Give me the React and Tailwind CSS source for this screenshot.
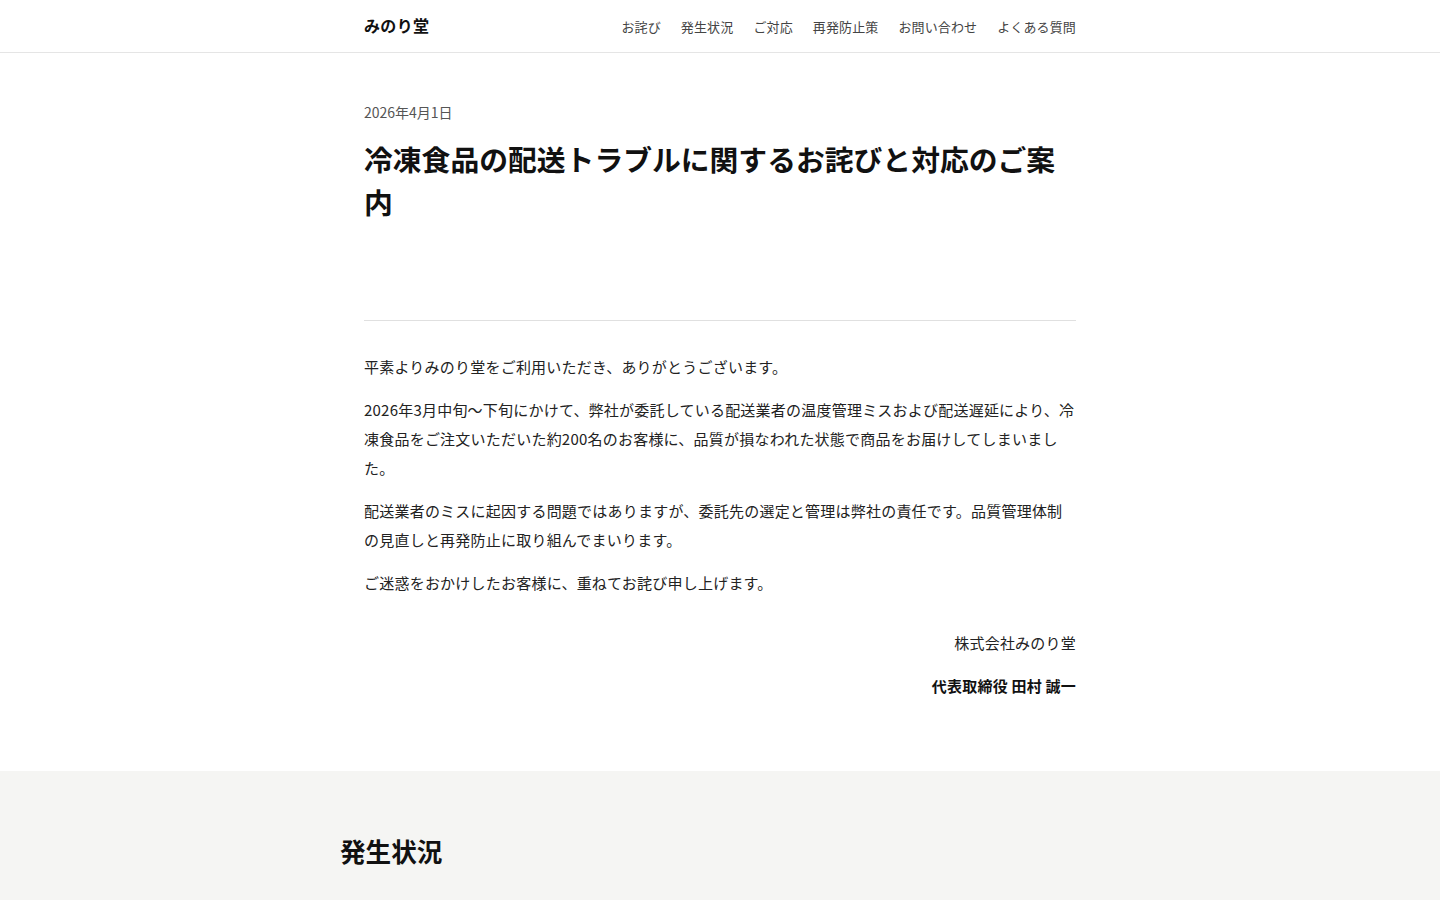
export default function App() {
  const sans = { fontFamily: '"Noto Sans CJK JP", "Noto Sans", sans-serif' };
  const nav = ["お詫び", "発生状況", "ご対応", "再発防止策", "お問い合わせ", "よくある質問"];
  return (
    <div className="min-h-screen bg-white text-[#222]" style={sans}>
      <header className="border-b border-[#e5e5e5] bg-white">
        <div className="mx-auto flex h-[52px] w-[712px] items-center justify-between">
          <div className="text-[16px] font-bold leading-none tracking-[0.02em] text-[#111] -mt-[2px]">みのり堂</div>
          <nav className="flex gap-[20px] text-[13px] leading-none tracking-[0.01em] text-[#444] mt-[1px]">
            {nav.map((n) => (
              <a key={n} href="#" className="whitespace-nowrap">{n}</a>
            ))}
          </nav>
        </div>
      </header>

      <main className="mx-auto w-[712px] pt-[47px] pb-[71px]">
        <div className="border-b border-[#e0e0e0] pb-[97px]">
          <p className="text-[14px] leading-[24px] text-[#555]">2026年4月1日</p>
          <h1 className="mt-[13px] text-[28.8px] font-bold leading-[1.5] text-[#111]">
            冷凍食品の配送トラブルに関するお詫びと対応のご案内
          </h1>
        </div>

        <div className="pt-[31px] text-[15px] leading-[29px] tracking-[0.22px] text-[#222]">
          <p className="mb-[14px]">平素よりみのり堂をご利用いただき、ありがとうございます。</p>
          <p className="mb-[14px]">
            2026年3月中旬〜下旬にかけて、弊社が委託している配送業者の温度管理ミスおよび配送遅延により、冷凍食品をご注文いただいた約200名のお客様に、品質が損なわれた状態で商品をお届けしてしまいました。
          </p>
          <p className="mb-[14px]">
            配送業者のミスに起因する問題ではありますが、委託先の選定と管理は弊社の責任です。品質管理体制の見直しと再発防止に取り組んでまいります。
          </p>
          <p>ご迷惑をおかけしたお客様に、重ねてお詫び申し上げます。</p>

          <div className="mt-[31px] text-right">
            <p className="mb-[14px]">株式会社みのり堂</p>
            <p className="font-bold text-[#111]">代表取締役 田村 誠一</p>
          </div>
        </div>
      </main>

      <section className="bg-[#f5f5f3] pt-[61px] pb-[80px]">
        <div className="mx-auto w-[760px]">
          <h2 className="text-[25.6px] font-bold leading-[1.5] text-[#111]">発生状況</h2>
        </div>
      </section>
    </div>
  );
}
